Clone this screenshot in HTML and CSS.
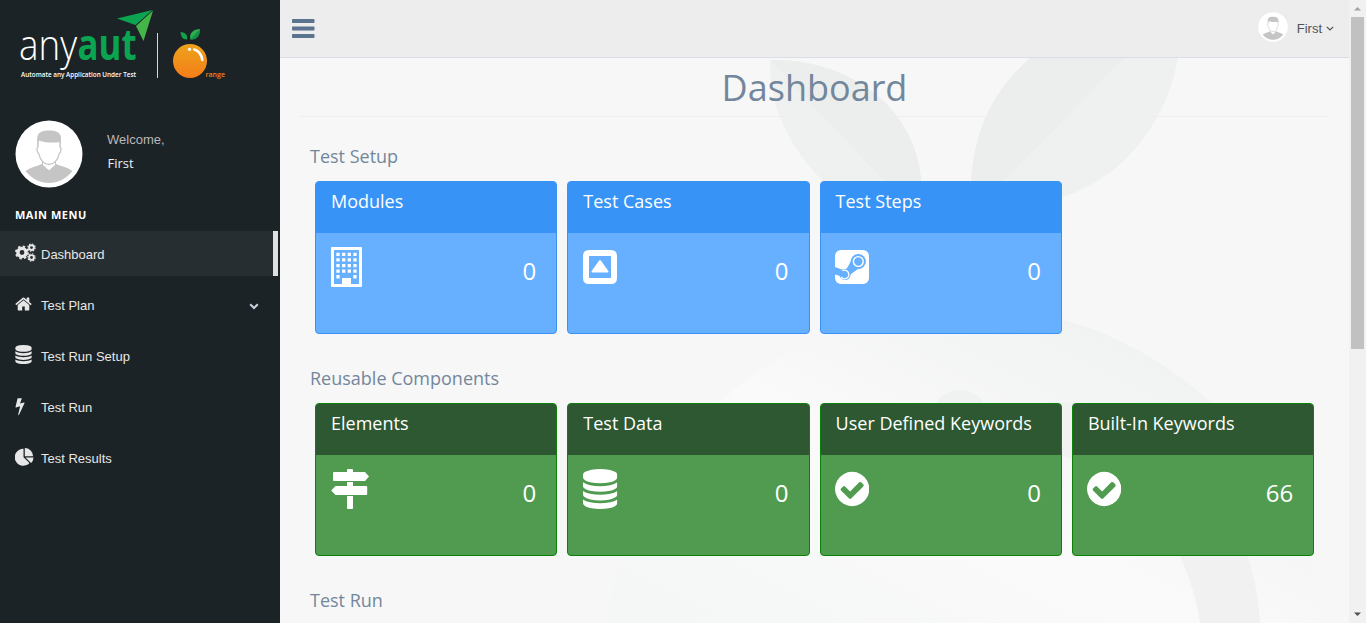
FILE: index.html
```html
<!DOCTYPE html>
<html lang="en">
<head>
<meta charset="utf-8">
<title>Dashboard</title>
<link rel="stylesheet" href="styles.css">
</head>
<body>
<svg class="defs" width="0" height="0">
  <defs>
    <symbol id="i-database" viewBox="128 0 1536 1792"><path d="M896 768q237 0 443-43t325-127v170q0 69-103 128t-280 93.5-385 34.5-385-34.5-280-93.5-103-128v-170q119 84 325 127t443 43zm0 768q237 0 443-43t325-127v170q0 69-103 128t-280 93.5-385 34.5-385-34.5-280-93.5-103-128v-170q119 84 325 127t443 43zm0-384q237 0 443-43t325-127v170q0 69-103 128t-280 93.5-385 34.5-385-34.5-280-93.5-103-128v-170q119 84 325 127t443 43zm0-1152q208 0 385 34.5t280 93.5 103 128v128q0 69-103 128t-280 93.5-385 34.5-385-34.5-280-93.5-103-128v-128q0-69 103-128t280-93.5 385-34.5z"/></symbol>
    <symbol id="i-check" viewBox="128 0 1536 1792"><path d="M1412 734q0-28-18-46l-91-90q-19-19-45-19t-45 19l-408 407-226-226q-19-19-45-19t-45 19l-91 90q-18 18-18 46 0 27 18 45l362 362q19 19 45 19 27 0 46-19l543-543q18-18 18-45zm252 162q0 209-103 385.500t-279.500 279.500-385.500 103-385.500-103-279.500-279.500-103-385.500 103-385.500 279.500-279.500 385.500-103 385.500 103 279.500 279.500 103 385.500z"/></symbol>
    <symbol id="i-avatar" viewBox="0 0 68 68">
      <circle cx="34" cy="34" r="33.500" fill="#fff"/>
      <path d="M10.500 51C16 47 23 46 27.500 43.500L34 51l6.500-7.500C45 46 52 47 57.500 51C51 59 43 63 34 63S17 59 10.500 51z" fill="#c5c5c5"/>
      <path d="M27.500 41v4l6.500 6 6.500-6v-4" fill="#fff" stroke="#c5c5c5" stroke-width="1"/>
      <path d="M23 19.500V27l-1 1c0 3 1 5.500 2 6C25 41 30 44.500 34 44.500S43 41 44 34c1-.5 2-3 2-6l-1-1v-7.500z" fill="#fff" stroke="#c5c5c5" stroke-width="1.300"/>
      <path d="M22.300 27V18C22.300 12 28 10.500 34 10.500S46 12 46 18v9l-1-5c-7 1-14 1-21-1.500z" fill="#c5c5c5"/>
    </symbol>
  </defs>
</svg>
<div class="app">
  <aside class="sidebar">
    <div class="brand">
      <svg width="280" height="100" viewBox="0 0 280 100">
        <defs>
          <linearGradient id="fruit" x1="0" y1="0" x2="0" y2="1"><stop offset="0" stop-color="#eda31b"/><stop offset="1" stop-color="#f47d18"/></linearGradient>
        </defs>
        <text class="logo-any" x="19" y="59.500" textLength="58" lengthAdjust="spacingAndGlyphs">any</text>
        <text class="logo-aut" x="77.500" y="59.500" textLength="59" lengthAdjust="spacingAndGlyphs">aut</text>
        <text class="logo-tag" x="21" y="76.500" textLength="115" lengthAdjust="spacingAndGlyphs">Automate any Application Under Test</text>
        <path d="M117 18.500L152.500 10 135.500 25z" fill="#0ba551"/>
        <path d="M153 10.500L143.500 41 136 26z" fill="#44b649"/>
        <path d="M157.500 33v45" stroke="#d5d7d8"/>
        <circle cx="190" cy="61" r="17" fill="url(#fruit)"/>
        <path d="M187 39.500c-5 0-6-3.500-6.500-7.500 5 .5 7.500 3 6.500 7.500z" fill="#12a24c"/>
        <path d="M190.500 39.500c-2-6 3-10.500 9.500-10.500 0 6-3 11-9.500 10.500z" fill="#2aad4a"/>
        <path d="M190.500 39.500l9.500-10.500c0 6-3 11-9.500 10.500z" fill="#0f8f48"/>
        <circle cx="189.500" cy="49.300" r="1.600" fill="#fff"/>
        <path d="M194.300 49.500c4.500 1.500 7.300 5 8 10.500" fill="none" stroke="#fff" stroke-width="2.600" stroke-linecap="round"/>
        <text class="logo-range" x="205.500" y="76.500" textLength="19.500" lengthAdjust="spacingAndGlyphs">range</text>
      </svg>
    </div>
    <div class="profile">
      <svg class="profile-pic"><use href="#i-avatar"/></svg>
      <div class="profile-info"><span class="welcome">Welcome,</span><span class="name">First</span></div>
    </div>
    <h3 class="menu-title">MAIN MENU</h3>
    <nav class="menu">
      <a class="item active"><span class="ico"><svg width="21" height="19" viewBox="0 0 21 19">
        <g fill="none" stroke="#e7e7e7"><circle cx="7" cy="9.500" r="4.100" stroke-width="3.400"/><circle cx="7" cy="9.500" r="6.100" stroke-width="1.700" stroke-dasharray="2.500 2.290"/>
        <circle cx="16.500" cy="4.600" r="2.400" stroke-width="1.900"/><circle cx="16.500" cy="4.600" r="3.700" stroke-width="1.100" stroke-dasharray="1.500 1.405"/>
        <circle cx="16.500" cy="14.500" r="2.400" stroke-width="1.900"/><circle cx="16.500" cy="14.500" r="3.700" stroke-width="1.100" stroke-dasharray="1.500 1.405"/></g></svg></span>Dashboard</a>
      <a class="item"><span class="ico"><svg width="18" height="18" viewBox="50 0 1792 1792"><path fill="#e7e7e7" d="M1472 992v480q0 26-19 45t-45 19h-384v-384h-256v384h-384q-26 0-45-19t-19-45v-480q0-1 .5-3t.5-3l575-474 575 474q1 2 1 6zm223-69l-62 74q-8 9-21 11h-3q-13 0-21-7l-692-577-692 577q-12 8-24 7-13-2-21-11l-62-74q-8-10-7-23.500t11-21.500l719-599q32-26 76-26t76 26l244 204v-195q0-14 9-23t23-9h192q14 0 23 9t9 23v408l219 182q10 8 11 21.500t-7 23.500z"/></svg></span>Test Plan
        <svg class="chev" width="10" height="7" viewBox="0 0 10 7"><path d="M1.200 1.300L5 5l3.800-3.700" fill="none" stroke="#c4cfda" stroke-width="2.200"/></svg></a>
      <a class="item"><span class="ico"><svg width="17" height="19" fill="#e7e7e7"><use href="#i-database"/></svg></span>Test Run Setup</a>
      <a class="item"><span class="ico"><svg width="10" height="18" viewBox="448 0 896 1792"><path fill="#e7e7e7" d="M1333 566q18 20 7 44l-540 1157q-13 25-42 25-4 0-14-2-17-5-25.500-19t-4.500-30l197-808-406 101q-4 1-12 1-18 0-31-11-18-15-13-39l201-825q4-16 18-27t32-12h328q19 0 32 12.500t13 29.500q0 8-5 18l-171 463 396-98q8-2 12-2 19 0 34 15z"/></svg></span>Test Run</a>
      <a class="item"><span class="ico"><svg width="19" height="18" viewBox="0 0 19 18"><g fill="#e7e7e7"><path d="M8.500 9.200L14.500 15A8.500 8.500 0 1 1 8.500.8z"/><path d="M9.800 0a8.300 8.300 0 0 1 8.300 8.200H9.800z"/><path d="M10.500 9.500h8a8.500 8.500 0 0 1-2.400 5.600z"/></g></svg></span>Test Results</a>
    </nav>
  </aside>

  <main class="main">
    <header class="topbar">
      <svg class="burger" width="23" height="19" viewBox="0 0 23 19"><g fill="#5a738e"><rect width="22.500" height="4" rx=".8"/><rect y="7.500" width="22.500" height="4" rx=".8"/><rect y="15" width="22.500" height="4" rx=".8"/></g></svg>
      <div class="user">
        <svg class="user-pic"><use href="#i-avatar"/></svg>
        <span>First</span>
        <svg width="8" height="5" viewBox="0 0 8 5"><path d="M.8.800L4 4 7.200.800" fill="none" stroke="#515356" stroke-width="1.200"/></svg>
      </div>
    </header>
    <section class="content">
      <svg class="watermark" width="1069" height="565" viewBox="280 58 1069 565">
        <defs>
          <linearGradient id="wm" gradientUnits="userSpaceOnUse" x1="1070" y1="320" x2="867" y2="726"><stop offset="0" stop-color="#f1f2f2"/><stop offset=".47" stop-color="#fafafa"/><stop offset="1" stop-color="#f5f6f6"/></linearGradient>
        </defs>
        <path d="M770 60C850 58 922 110 921.500 192H836C795 160 768 110 770 60z" fill="#eff1f0"/>
        <path d="M770 60C850 58 922 110 921.500 192H895z" fill="#eceeed"/>
        <path d="M1030 58H1178C1168 115 1130 175 1063 197L1000 215H971C967 150 984 98 1030 58z" fill="#eff1f0"/>
        <path d="M1030 58H1124L971 215C967 150 984 98 1030 58z" fill="#eceeed"/>
        <circle cx="965" cy="667" r="361" fill="url(#wm)"/>
        <circle cx="960" cy="418" r="28" fill="#f0f1f1"/>
        <path d="M1050 402C1145 400 1258 480 1261 640H1202C1194 550 1147 480 1050 452C1025 440 1025 405 1050 402z" fill="#f1f1f1"/>
      </svg>
      <h1 class="page-title">Dashboard</h1>
      <div class="group">
        <h2>Test Setup</h2>
        <div class="cards">
          <div class="card blue"><div class="head">Modules</div><div class="body">
            <svg width="32" height="40" viewBox="0 0 32 40"><path fill="#fff" fill-rule="evenodd" d="M1 0h29q1 0 1 1v38q0 1-1 1H1q-1 0-1-1V1q0-1 1-1zM3 3v34h8v-6h9v6h8V3z"/><path d="M7 5.700v26M12.700 5.700v20M18.300 5.700v20M24 5.700v26" stroke="#fff" stroke-width="3.300" stroke-dasharray="3.300 2.300" fill="none"/></svg><b>0</b></div></div>
          <div class="card blue"><div class="head">Test Cases</div><div class="body">
            <svg width="34" height="40" viewBox="0 0 34 40"><path fill="#fff" fill-rule="evenodd" d="M6 3h22q6 0 6 6v22q0 6-6 6H6q-6 0-6-6V9q0-6 6-6zM6 9v22h22V9z"/><path d="M17 14l7.500 10.500H9.500z" fill="#fff" stroke="#fff" stroke-width="2" stroke-linejoin="round"/></svg><b>0</b></div></div>
          <div class="card blue"><div class="head">Test Steps</div><div class="body">
            <svg class="steam" width="34" height="40" viewBox="0 0 34 40"><rect y="3" width="34" height="34" rx="6" fill="#fff"/><g fill="#66b0ff"><path d="M0 20l8 3q3 0 5-3.500l3.500-6.500 9 9-3 .3-7 5.200-5 3L0 27.500z"/><circle cx="23.300" cy="14.500" r="7.600"/><circle cx="10" cy="27.500" r="5.600"/></g><circle cx="23.300" cy="14.500" r="4.900" fill="none" stroke="#fff" stroke-width="1.400"/><path d="M7.500 23.700a4.300 4.300 0 1 1-1.500 6.300" fill="none" stroke="#fff" stroke-width="1.400"/></svg><b>0</b></div></div>
        </div>
      </div>
      <div class="group">
        <h2>Reusable Components</h2>
        <div class="cards">
          <div class="card green"><div class="head">Elements</div><div class="body">
            <svg width="39" height="40" viewBox="0 0 39 40"><g fill="#fff"><path d="M16 3V1q0-1 1-1h4q1 0 1 1v2h12l4 4.500-4 4.500H3q-1 0-1-1V4q0-1 1-1zM16 13h6v4h13.200q1 0 1 1v7q0 1-1 1H4.500L.2 21.500 4.500 17H16zM16 27h6v12q0 1-1 1h-4q-1 0-1-1z"/></g></svg><b>0</b></div></div>
          <div class="card green"><div class="head">Test Data</div><div class="body"><svg class="fa"><use href="#i-database"/></svg><b>0</b></div></div>
          <div class="card green"><div class="head">User Defined Keywords</div><div class="body"><svg class="fa check"><use href="#i-check"/></svg><b>0</b></div></div>
          <div class="card green"><div class="head">Built-In Keywords</div><div class="body"><svg class="fa check"><use href="#i-check"/></svg><b>66</b></div></div>
        </div>
      </div>
      <div class="group"><h2>Test Run</h2></div>
    </section>
  </main>

  <div class="scrollbar">
    <svg width="17" height="17"><path d="M5 10.500h7L8.500 7z" fill="#a3a3a3"/></svg>
    <div class="thumb"></div>
    <svg width="17" height="17"><path d="M5 6.500h7L8.500 10z" fill="#505050"/></svg>
  </div>
</div>
</body>
</html>
```
FILE: styles.css
```css
* { box-sizing: border-box; }
body { margin: 0; background: #f7f7f7; font-family: "Liberation Sans", Arial, sans-serif; font-size: 13px; overflow: hidden; }
svg { display: block; flex: none; }
.defs { position: absolute; }
.app { display: flex; height: 623px; width: 1366px; overflow: hidden; }

.sidebar { width: 280px; flex: none; background: #1c2326; color: #fff; }
.brand { height: 120px; }
.logo-any { font: 300 43px "Open Sans", sans-serif; fill: #fff; }
.logo-aut { font: 700 43px "Open Sans", sans-serif; fill: #0ba551; }
.logo-tag { font: 600 7px "Open Sans", sans-serif; fill: #fff; }
.logo-range { font: 600 7px "Open Sans", sans-serif; fill: #f08019; }
.profile { display: flex; height: 68px; padding-left: 15px; gap: 24px; }
.profile-pic { width: 68px; height: 68px; }
.profile-info { display: flex; flex-direction: column; padding-top: 10px; }
.welcome { color: #bab8b8; line-height: 19px; height: 23px; }
.name { font: 13px/20px "Open Sans", sans-serif; color: #ecf0f1; padding-left: .5px; }
.menu-title { margin: 17px 0 6px; padding-left: 15px; font: 700 11px/20px "Open Sans", sans-serif; letter-spacing: .5px; }
.menu { display: flex; flex-direction: column; gap: 6px; width: 278px; }
.item { display: flex; align-items: center; height: 45px; padding: 1px 14px 0 15px; color: #e7e7e7; border-right: 5px solid transparent; }
.item.active { background: #272e31; border-right-color: #e0e0e0; }
.ico { width: 26px; margin-top: -3px; }
.ico svg { margin-left: -.5px; }
.chev { margin-left: auto; margin-top: 3px; }

.main { flex: 1; display: flex; flex-direction: column; min-width: 0; }
.topbar { display: flex; justify-content: space-between; height: 58px; flex: none; background: #ededed; border-bottom: 1px solid #d9dee4; padding: 0 15px 0 12px; }
.burger { margin-top: 19px; }
.user { display: flex; align-items: center; height: 56px; color: #515356; }
.user-pic { width: 30px; height: 30px; margin: -2px 9px 0 0; }
.user span { margin-right: 4px; }
.content { position: relative; flex: 1; padding: 0 20px; color: #73879c; font-family: "Open Sans", sans-serif; }
.watermark { position: absolute; left: 0; top: 0; }
.page-title { position: relative; margin: 0; height: 59px; border-bottom: 1px solid #eee; text-align: center; font-weight: 400; font-size: 36px; line-height: 60px; }
.group { position: relative; height: 222px; padding: 27px 15px 0; }
.group h2 { margin: 0 0 12px -5px; font-size: 18px; line-height: 25px; font-weight: 400; }
.cards { display: grid; grid-template-columns: repeat(4, 242.300px); gap: 10px; }
.card { height: 153px; border: 1px solid #3893f6; border-radius: 4px; background: #66b0ff; color: #fff; overflow: hidden; }
.head { height: 51px; padding: 7px 15px; background: #3893f6; font-size: 18px; line-height: 25px; white-space: nowrap; }
.body { display: flex; justify-content: space-between; padding: 14px 20px 0 15px; }
.body b { font-weight: 400; font-size: 24px; line-height: 33px; margin-top: 7px; }
.fa { width: 34.300px; height: 40px; fill: #fff; }
.check, .steam { margin-left: -.6px; }
.green { background: #509b50; border-color: #0a820a; }
.green .head { background: #2d5831; }

.scrollbar { width: 17px; background: #f1f1f1; display: flex; flex-direction: column; }
.thumb { width: 13px; height: 332px; margin: 0 2px auto; background: #c1c1c1; }
```
